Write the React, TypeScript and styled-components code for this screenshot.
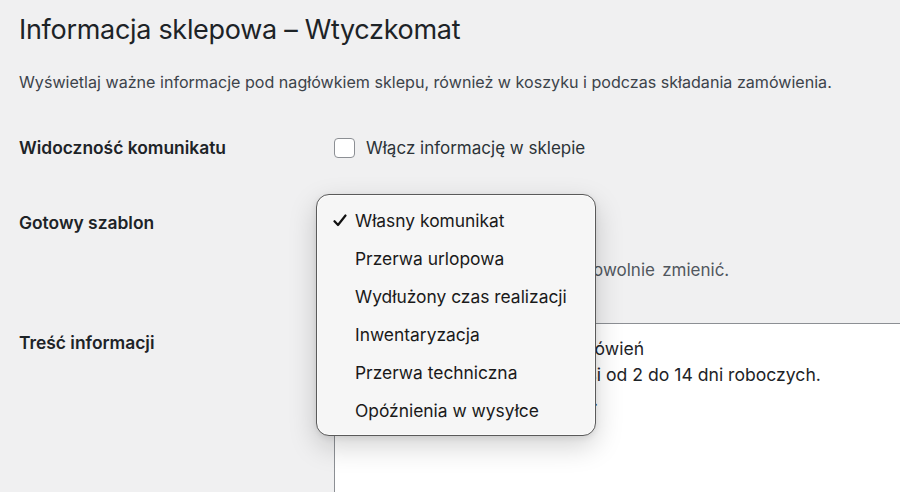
import React from "react";
import styled, { createGlobalStyle } from "styled-components";

const GlobalStyle = createGlobalStyle`
  html, body {
    margin: 0;
    padding: 0;
    background: #f0f0f1;
    overflow: hidden;
  }
  body {
    font-family: Inter, "Noto Sans", "Liberation Sans", sans-serif;
    color: #1d2327;
  }
`;

const Page = styled.div`
  padding: 12px 0 0 19px;
  height: 480px;
  overflow: hidden;
`;

const Title = styled.h1`
  margin: 0;
  font-size: 27px;
  font-weight: 400;
  line-height: 36px;
  color: #1d2327;
  letter-spacing: -0.3px;
`;

const Intro = styled.p`
  margin: 22px 0 0;
  font-size: 16.1px;
  line-height: 24px;
  color: #3c434a;
`;

const FormTable = styled.div`
  margin-top: 42px;
  display: flex;
  flex-direction: column;
`;

const Row = styled.div<{ $top: number }>`
  display: grid;
  grid-template-columns: 315px 1fr;
  margin-top: ${(p) => p.$top}px;
`;

const Label = styled.div<{ $offset: number }>`
  padding-top: ${(p) => p.$offset}px;
  font-size: 17.4px;
  font-weight: 600;
  line-height: 24px;
  color: #1d2327;
`;

const Field = styled.div`
  display: flex;
  flex-direction: column;
  align-items: flex-start;
`;

const CheckLine = styled.label`
  display: flex;
  align-items: center;
  gap: 11px;
  font-size: 17px;
  line-height: 24px;
  color: #2c3338;
`;

const Checkbox = styled.span`
  width: 19px;
  height: 18px;
  border: 1px solid #8c8f94;
  border-radius: 4px;
  background: #fff;
`;

const SelectWrap = styled.div`
  position: relative;
  width: 240px;
  height: 30px;
`;

const SelectBox = styled.div`
  width: 100%;
  height: 100%;
  box-sizing: border-box;
  border: 1px solid #8c8f94;
  border-radius: 4px;
  background: #fff;
`;

const Menu = styled.ul`
  position: absolute;
  top: -14px;
  left: -18px;
  width: 280px;
  height: 242px;
  box-sizing: border-box;
  margin: 0;
  padding: 6px 0;
  list-style: none;
  background: #f6f6f6;
  border: 1px solid #5a5a5a;
  border-radius: 13px;
  box-shadow: 0 0 0 1px rgba(255, 255, 255, 0.6) inset,
    0 10px 28px rgba(0, 0, 0, 0.18), 0 2px 6px rgba(0, 0, 0, 0.08);
  z-index: 5;
`;

const MenuItem = styled.li`
  position: relative;
  height: 38px;
  display: flex;
  align-items: center;
  padding-left: 38px;
  font-size: 17.4px;
  color: #1a1a1a;
`;

const Tick = styled.svg`
  position: absolute;
  left: 16px;
  top: 13px;
`;

const Hint = styled.p`
  margin: 20px 0 0;
  font-size: 17px;
  line-height: 24px;
  word-spacing: 2.5px;
  color: #50575e;
`;

const TextArea = styled.div`
  width: 640px;
  height: 200px;
  box-sizing: border-box;
  border: 1px solid #8c8f94;
  border-right: none;
  background: #fff;
  padding: 12px 11px;
  font-size: 17.6px;
  line-height: 25.5px;
  color: #1d2327;
  white-space: pre;
`;

const options = [
  "Własny komunikat",
  "Przerwa urlopowa",
  "Wydłużony czas realizacji",
  "Inwentaryzacja",
  "Przerwa techniczna",
  "Opóźnienia w wysyłce",
];

export default function App() {
  return (
    <Page>
      <GlobalStyle />
      <Title>Informacja sklepowa – Wtyczkomat</Title>
      <Intro>
        Wyświetlaj ważne informacje pod nagłówkiem sklepu, również w koszyku i
        podczas składania zamówienia.
      </Intro>
      <FormTable>
        <Row $top={0}>
          <Label $offset={0}>Widoczność komunikatu</Label>
          <Field>
            <CheckLine>
              <Checkbox />
              Włącz informację w sklepie
            </CheckLine>
          </Field>
        </Row>
        <Row $top={48}>
          <Label $offset={3}>Gotowy szablon</Label>
          <Field>
            <SelectWrap>
              <SelectBox />
              <Menu>
                {options.map((o, i) => (
                  <MenuItem key={o}>
                    {i === 0 && (
                      <Tick width="14" height="13" viewBox="0 0 14 13">
                        <path
                          d="M1.5 7.2 L5 11 L12.5 1.5"
                          fill="none"
                          stroke="#111"
                          strokeWidth="2.2"
                          strokeLinecap="round"
                          strokeLinejoin="round"
                        />
                      </Tick>
                    )}
                    {o}
                  </MenuItem>
                ))}
              </Menu>
            </SelectWrap>
            <Hint>Treść wybranej opcji możesz dowolnie zmienić.</Hint>
          </Field>
        </Row>
        <Row $top={41}>
          <Label $offset={8}>Treść informacji</Label>
          <Field>
            <TextArea>
              {"Wydłużony czas wysyłek zamówień\nObecnie czas realizacji wynosi od 2 do 14 dni roboczych.\nPrzepraszamy za komplikacje."}
            </TextArea>
          </Field>
        </Row>
      </FormTable>
    </Page>
  );
}
